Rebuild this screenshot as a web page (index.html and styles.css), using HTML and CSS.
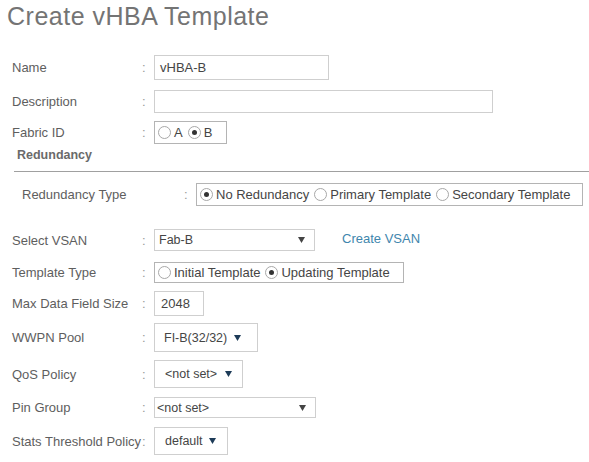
FILE: index.html
```html
<!DOCTYPE html>
<html>
<head>
<meta charset="utf-8">
<link rel="stylesheet" href="styles.css">
</head>
<body>
<div class="page">
  <h1 class="title">Create vHBA Template</h1>
  <div class="form">
    <div class="row r-name">
      <span class="label">Name</span><span class="colon">:</span>
      <div class="input w-name">vHBA-B</div>
    </div>
    <div class="row r-desc">
      <span class="label">Description</span><span class="colon">:</span>
      <div class="input w-desc"></div>
    </div>
    <div class="row r-fabric">
      <span class="label">Fabric ID</span><span class="colon">:</span>
      <div class="radios w-fabric">
        <span class="opt"><span class="radio"></span>A</span>
        <span class="opt"><span class="radio on"></span>B</span>
      </div>
    </div>
    <div class="heading">Redundancy</div>
    <div class="divider"></div>
    <div class="row r-redtype">
      <span class="label label-wide">Redundancy Type</span><span class="colon">:</span>
      <div class="radios w-red">
        <span class="opt"><span class="radio on"></span>No Redundancy</span>
        <span class="opt"><span class="radio"></span>Primary Template</span>
        <span class="opt"><span class="radio"></span>Secondary Template</span>
      </div>
    </div>
    <div class="row r-vsan">
      <span class="label">Select VSAN</span><span class="colon">:</span>
      <div class="select w-vsan"><span class="val">Fab-B</span><svg class="arrow gray" width="7" height="6" viewBox="0 0 7 6"><polygon points="0,0 7,0 3.5,6"/></svg></div>
      <span class="link">Create VSAN</span>
    </div>
    <div class="row r-template">
      <span class="label">Template Type</span><span class="colon">:</span>
      <div class="radios w-template">
        <span class="opt"><span class="radio"></span>Initial Template</span>
        <span class="opt"><span class="radio on"></span>Updating Template</span>
      </div>
    </div>
    <div class="row r-max">
      <span class="label">Max Data Field Size</span><span class="colon">:</span>
      <div class="input w-max">2048</div>
    </div>
    <div class="row r-wwpn">
      <span class="label">WWPN Pool</span><span class="colon">:</span>
      <div class="select w-wwpn"><span class="val">FI-B(32/32)</span><svg class="arrow" width="7" height="6" viewBox="0 0 7 6"><polygon points="0,0 7,0 3.5,6"/></svg></div>
    </div>
    <div class="row r-qos">
      <span class="label">QoS Policy</span><span class="colon">:</span>
      <div class="select w-qos"><span class="val">&lt;not set&gt;</span><svg class="arrow" width="7" height="6" viewBox="0 0 7 6"><polygon points="0,0 7,0 3.5,6"/></svg></div>
    </div>
    <div class="row r-pin">
      <span class="label">Pin Group</span><span class="colon">:</span>
      <div class="select w-pin"><span class="val">&lt;not set&gt;</span><svg class="arrow gray" width="7" height="6" viewBox="0 0 7 6"><polygon points="0,0 7,0 3.5,6"/></svg></div>
    </div>
    <div class="row r-stats">
      <span class="label">Stats Threshold Policy</span><span class="colon">:</span>
      <div class="select w-stats"><span class="val">default</span><svg class="arrow" width="7" height="6" viewBox="0 0 7 6"><polygon points="0,0 7,0 3.5,6"/></svg></div>
    </div>
  </div>
</div>
</body>
</html>
```
FILE: styles.css
```css
* { box-sizing: border-box; }
html, body { margin: 0; padding: 0; background: #fff; }
body {
  font-family: "Liberation Sans", Arial, sans-serif;
  color: #5a5a5a;
  width: 589px;
  height: 462px;
  overflow: hidden;
}
.title {
  margin: 2px 0 0 7px;
  font-size: 25px;
  line-height: 28px;
  font-weight: normal;
  color: #747474;
  letter-spacing: 0.5px;
}
.form {
  display: flex;
  flex-direction: column;
  padding-left: 12px;
  font-size: 13px;
}
.row {
  display: flex;
  align-items: center;
}
.label {
  width: 130px;
  flex: none;
  white-space: nowrap;
  color: #5e5e5e;
}
.label-wide { width: 172px; padding-left: 10px; }
.colon {
  width: 12px;
  flex: none;
  color: #999;
}
.input, .select, .radios {
  border: 1px solid #cfcfcf;
  height: 100%;
  display: flex;
  align-items: center;
  color: #454545;
  background: #fff;
}
.input { padding-left: 5px; }
.radios { border-color: #b4b4b4; padding-left: 3px; }
.opt {
  display: inline-flex;
  align-items: center;
  gap: 3px;
  margin-right: 5px;
}
.radio {
  width: 13px;
  height: 13px;
  border: 1px solid #a8a8a8;
  border-radius: 50%;
  display: inline-flex;
  align-items: center;
  justify-content: center;
}
.radio.on::after {
  content: "";
  width: 5px;
  height: 5px;
  border-radius: 50%;
  background: #333;
}
.select { justify-content: space-between; font-size: 12.5px; }
.arrow { fill: #1d3b58; flex: none; }
.arrow.gray { fill: #444; }
.link { color: #3f86ad; margin-left: 27px; margin-top: -4px; }
.heading {
  margin-top: 2px;
  height: 18px;
  line-height: 18px;
  padding-left: 5px;
  font-weight: bold;
  font-size: 12.5px;
  color: #6a6a6a;
}
.divider {
  margin-top: 7px;
  margin-left: 2px;
  height: 1px;
  background: #a0a0a0;
}
.r-name { margin-top: 25px; height: 25px; }
.r-desc { margin-top: 10px; height: 23px; }
.r-fabric { margin-top: 8px; height: 23px; }
.r-redtype { margin-top: 11px; height: 23px; }
.r-vsan { margin-top: 23px; height: 22px; }
.r-template { margin-top: 11px; height: 21px; }
.r-max { margin-top: 8px; height: 25px; }
.r-wwpn { margin-top: 7px; height: 29px; }
.r-qos { margin-top: 8px; height: 28px; }
.r-pin { margin-top: 9px; height: 21px; }
.r-stats { margin-top: 9px; height: 28px; }
.w-name { width: 175px; }
.w-desc { width: 339px; }
.w-fabric { width: 73px; }
.w-red { width: 387px; }
.w-template { width: 250px; }
.w-max { width: 50px; padding-left: 6px; }
.w-vsan { width: 161px; padding: 0 9px 0 4px; }
.w-wwpn { width: 104px; padding: 0 16px 0 9px; }
.w-qos { width: 89px; padding: 0 10px 0 10px; }
.w-pin { width: 162px; padding: 0 9px 0 2px; }
.w-stats { width: 74px; padding: 0 11px 0 10px; }
```
